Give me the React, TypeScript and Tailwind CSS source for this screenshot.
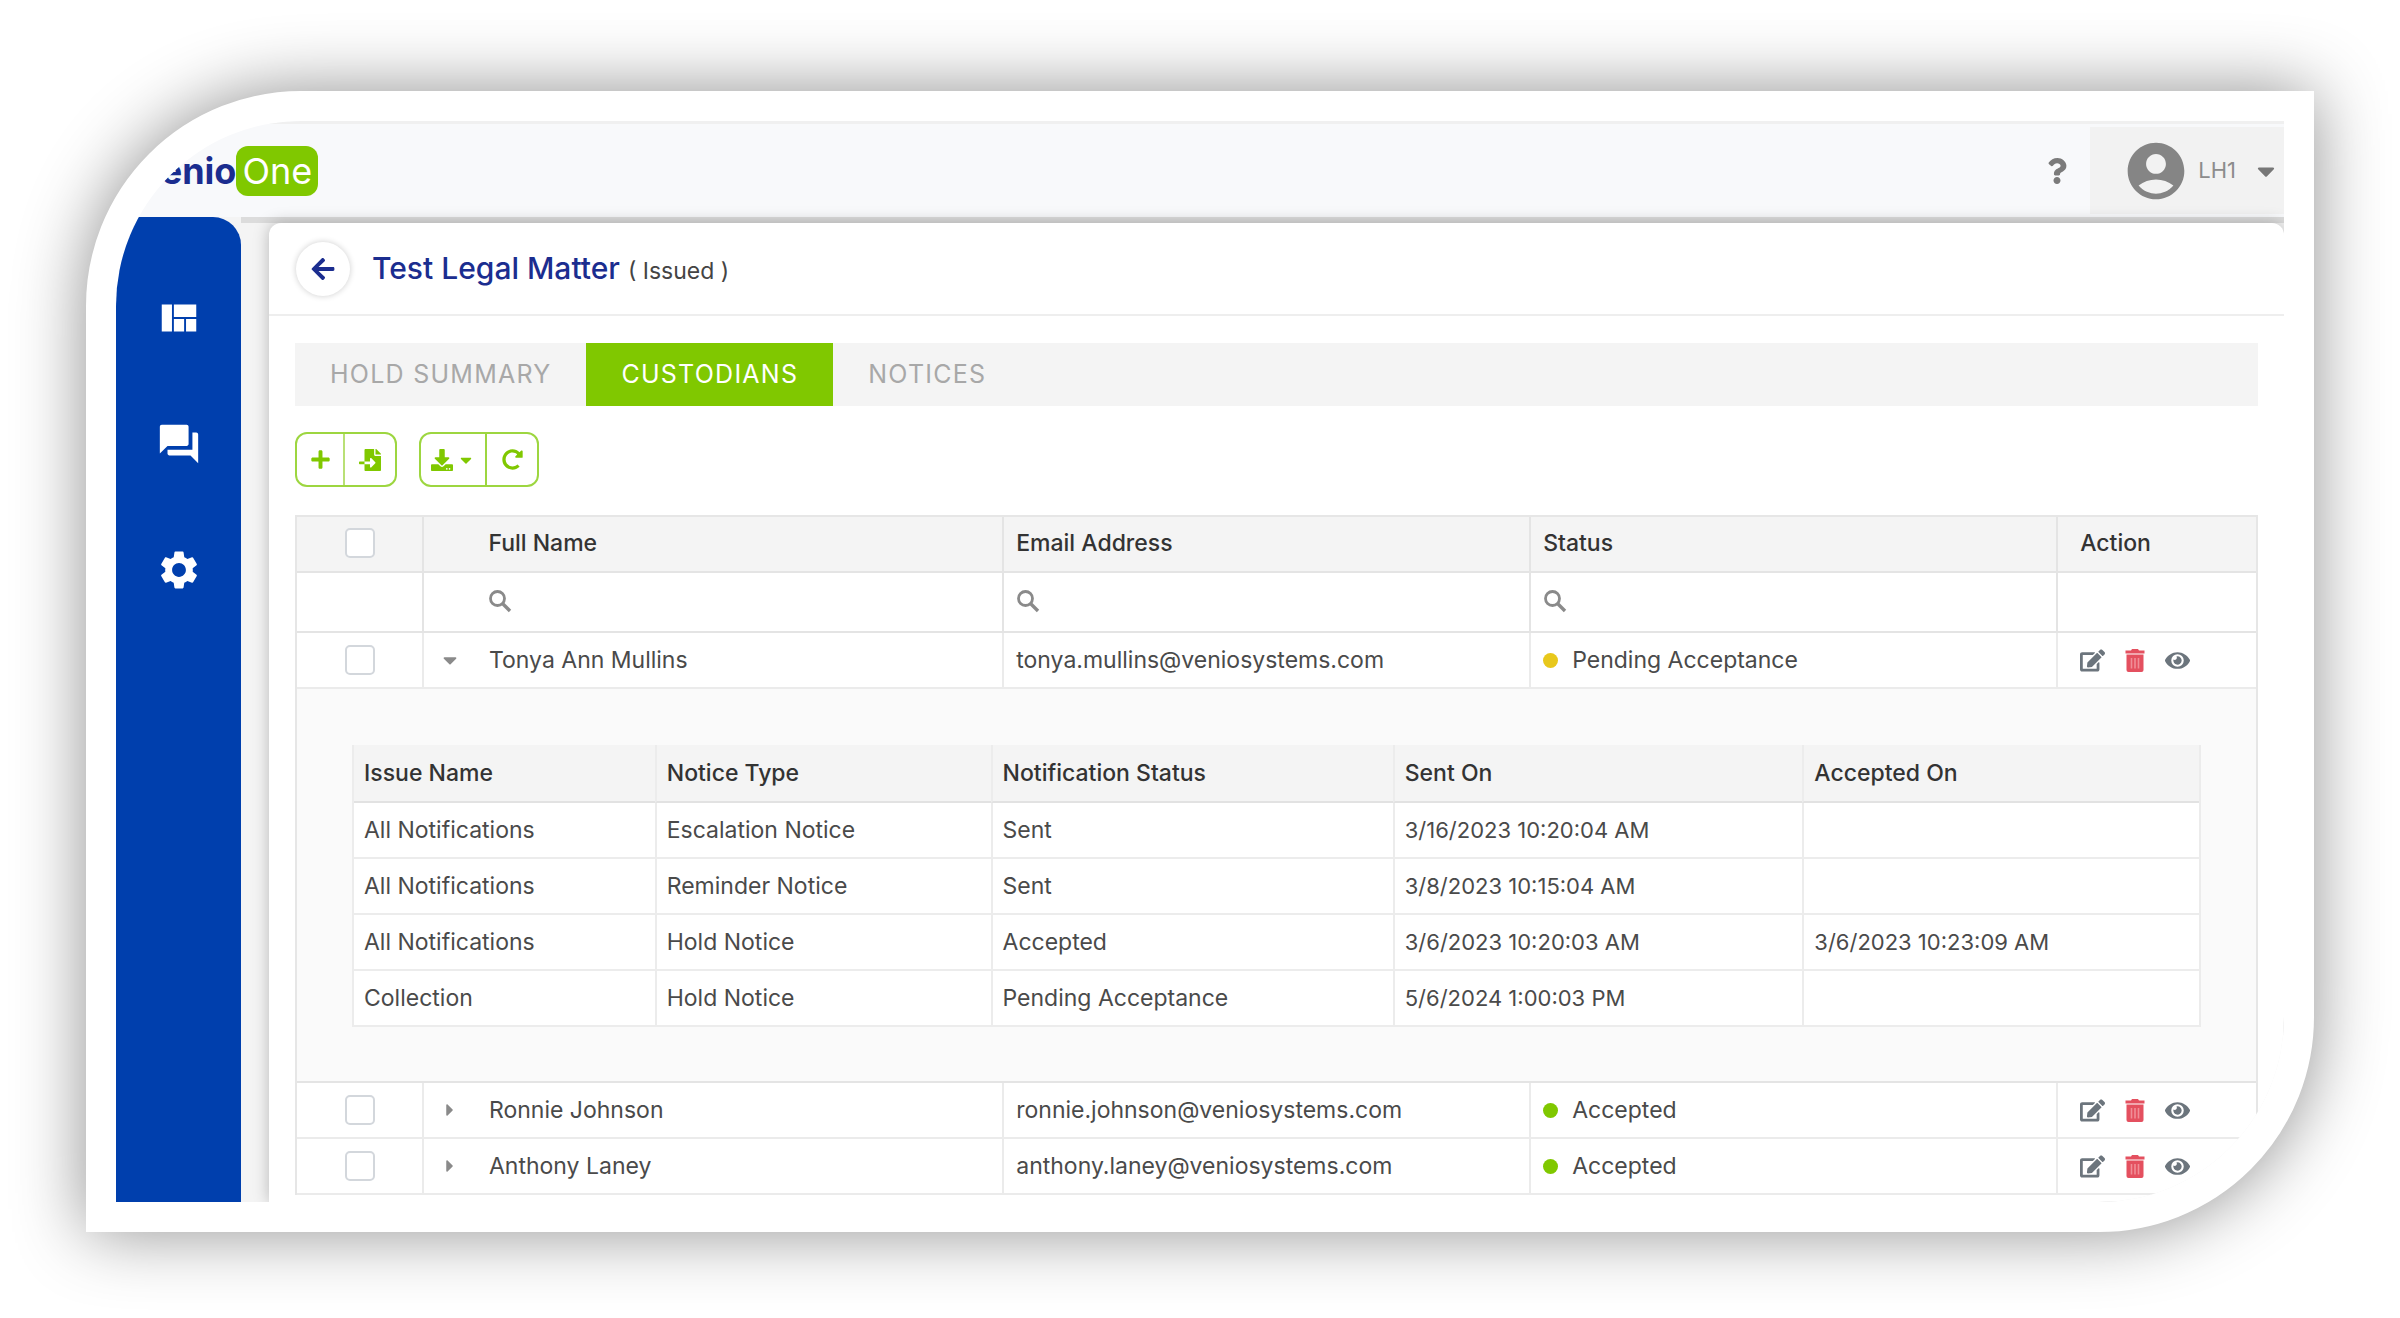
import { useState } from 'react'
import { FaPlus, FaFileImport, FaDownload, FaCaretDown, FaCaretRight, FaQuestion, FaEdit, FaEye, FaArrowLeft, FaRedoAlt } from 'react-icons/fa'
import { MdAccountCircle, MdSettings, MdQuestionAnswer, MdViewQuilt } from 'react-icons/md'

type Custodian = {
  name: string
  email: string
  status: 'Pending Acceptance' | 'Accepted'
}

const custodians: Custodian[] = [
  { name: 'Tonya Ann Mullins', email: 'tonya.mullins@veniosystems.com', status: 'Pending Acceptance' },
  { name: 'Ronnie Johnson', email: 'ronnie.johnson@veniosystems.com', status: 'Accepted' },
  { name: 'Anthony Laney', email: 'anthony.laney@veniosystems.com', status: 'Accepted' },
]

const notices = [
  { issue: 'All Notifications', type: 'Escalation Notice', status: 'Sent', sentOn: '3/16/2023 10:20:04 AM', acceptedOn: '' },
  { issue: 'All Notifications', type: 'Reminder Notice', status: 'Sent', sentOn: '3/8/2023 10:15:04 AM', acceptedOn: '' },
  { issue: 'All Notifications', type: 'Hold Notice', status: 'Accepted', sentOn: '3/6/2023 10:20:03 AM', acceptedOn: '3/6/2023 10:23:09 AM' },
  { issue: 'Collection', type: 'Hold Notice', status: 'Pending Acceptance', sentOn: '5/6/2024 1:00:03 PM', acceptedOn: '' },
]

const tabs = ['HOLD SUMMARY', 'CUSTODIANS', 'NOTICES']

function Checkbox({ label }: { label: string }) {
  return (
    <input
      type="checkbox"
      aria-label={label}
      className="mx-auto block size-[30px] appearance-none rounded-[5px] border-2 border-[#d3d7dc] bg-white checked:bg-[#80c800]"
    />
  )
}

function TrashIcon() {
  return (
    <svg viewBox="0 0 20 23" className="h-[23px] w-5" aria-hidden="true">
      <path d="M7 0h6l1 1.5h5.5v3H.5v-3H6z" fill="#e4505f" />
      <path d="M1.5 5.5h17V21a2 2 0 0 1-2 2h-13a2 2 0 0 1-2-2z" fill="#e4505f" />
      <path d="M6.5 9v10.5M10 9v10.5M13.5 9v10.5" stroke="#f08e97" strokeWidth="1.6" />
    </svg>
  )
}

function SearchIcon() {
  return (
    <svg viewBox="0 0 24 24" className="size-6" fill="none" stroke="currentColor" aria-hidden="true">
      <circle cx="9.5" cy="9.5" r="7" strokeWidth="2.8" />
      <path d="M14.5 14.5l7.5 7.5" strokeWidth="3.4" />
    </svg>
  )
}

function TopBar() {
  return (
    <header className="flex h-24 items-stretch border-t-3 border-[#f0f0f0] bg-[#f8f9fb]">
      <div className="flex flex-1 items-center pl-5">
        <span className="text-4xl font-bold text-[#1b2d8f]">Venio</span>
        <span className="flex h-[50px] items-center rounded-xl bg-[#80c800] px-1.5 text-4xl text-white">One</span>
      </div>
      <button type="button" aria-label="Help" className="px-5 text-[#7b7b7b]">
        <FaQuestion size={26} />
      </button>
      <button type="button" className="my-[3px] flex items-center bg-[#f2f2f2] pl-8 pr-1 text-[22px] text-[#8c8c8c]">
        <MdAccountCircle size={68} className="text-[#858585]" />
        <span className="pl-2">LH1</span>
        <FaCaretDown size={28} className="ml-4 text-[#777777]" />
      </button>
    </header>
  )
}

function Sidebar() {
  return (
    <nav className="flex w-[125px] shrink-0 flex-col items-center gap-20 rounded-tr-[28px] bg-[#003fad] pt-[78px] text-white">
      <a href="#dashboard" aria-label="Dashboard">
        <MdViewQuilt size={46} />
      </a>
      <a href="#messages" aria-label="Messages">
        <MdQuestionAnswer size={46} />
      </a>
      <a href="#settings" aria-label="Settings">
        <MdSettings size={46} />
      </a>
    </nav>
  )
}

function Toolbar() {
  return (
    <div className="mt-[26px] flex gap-[22px] text-[#80c800]">
      <div className="flex h-[55px] divide-x-2 divide-[#b9e076] rounded-xl border-2 border-[#9dd640]">
        <button type="button" aria-label="Add custodian" className="flex w-12 items-center justify-center">
          <FaPlus size={21} />
        </button>
        <button type="button" aria-label="Import custodians" className="flex w-[50px] items-center justify-center">
          <FaFileImport size={22} />
        </button>
      </div>
      <div className="flex h-[55px] divide-x-2 divide-[#9dd640] rounded-xl border-2 border-[#9dd640]">
        <button type="button" aria-label="Download" className="flex w-[66px] items-center justify-center gap-1">
          <FaDownload size={22} />
          <FaCaretDown size={18} />
        </button>
        <button type="button" aria-label="Refresh" className="flex w-[50px] items-center justify-center">
          <FaRedoAlt size={21} />
        </button>
      </div>
    </div>
  )
}

function NoticeTable() {
  return (
    <table className="w-full table-fixed border-separate border-spacing-0 border-x-2 border-[#ececec] bg-white text-left">
      <colgroup>
        <col className="w-[16.3%]" />
        <col className="w-[18.2%]" />
        <col className="w-[21.8%]" />
        <col className="w-[22.2%]" />
        <col />
      </colgroup>
      <thead>
        <tr className="h-[58px] bg-[#f4f4f4] text-[#333333]">
          {['Issue Name', 'Notice Type', 'Notification Status', 'Sent On', 'Accepted On'].map((title) => (
            <th key={title} className="border-b-2 border-l-2 border-b-[#e2e2e2] border-l-[#ececec] px-2.5 font-medium first:border-l-0">
              {title}
            </th>
          ))}
        </tr>
      </thead>
      <tbody>
        {notices.map((notice, i) => (
          <tr key={i} className="h-14 *:border-b-2 *:border-l-2 *:border-[#ececec] *:px-2.5 *:first:border-l-0">
            <td>{notice.issue}</td>
            <td>{notice.type}</td>
            <td>{notice.status}</td>
            <td className="text-[22px]">{notice.sentOn}</td>
            <td className="text-[22px]">{notice.acceptedOn}</td>
          </tr>
        ))}
      </tbody>
    </table>
  )
}

function CustodianRow({ custodian, open, onToggle }: { custodian: Custodian; open: boolean; onToggle: () => void }) {
  const { name, email, status } = custodian

  return (
    <>
      <tr className="h-14 *:border-b-2 *:border-[#ebebeb]">
        <td>
          <Checkbox label={`Select ${name}`} />
        </td>
        <td className="border-l-2 pl-3.5">
          <button type="button" aria-label={`Toggle ${name}`} aria-expanded={open} onClick={onToggle} className="flex size-6 items-center justify-center text-[#8a8a8a]">
            {open ? <FaCaretDown size={22} /> : <FaCaretRight size={20} />}
          </button>
        </td>
        <td>{name}</td>
        <td className="border-l-2 pl-3">{email}</td>
        <td className="border-l-2 pl-3">
          <span className="flex items-center gap-3.5">
            <span className={`size-[15px] rounded-full ${status === 'Accepted' ? 'bg-[#80c800]' : 'bg-[#e8c81c]'}`} />
            {status}
          </span>
        </td>
        <td className="border-l-2 pl-[22px]">
          <span className="flex items-center gap-5 text-[#6c757d]">
            <button type="button" aria-label={`Edit ${name}`}>
              <FaEdit size={25} />
            </button>
            <button type="button" aria-label={`Delete ${name}`}>
              <TrashIcon />
            </button>
            <button type="button" aria-label={`View ${name}`}>
              <FaEye size={25} />
            </button>
          </span>
        </td>
      </tr>
      {open && (
        <tr>
          <td colSpan={6} className="border-b-2 border-[#e4e4e4] bg-[#fafafa] px-[55px] pb-[54px] pt-[56px]">
            <NoticeTable />
          </td>
        </tr>
      )}
    </>
  )
}

function CustodianTable() {
  const [openName, setOpenName] = useState<string | null>('Tonya Ann Mullins')

  return (
    <table className="mt-7 w-full table-fixed border-separate border-spacing-0 border-x-2 border-t-2 border-[#e6e6e6] text-left text-[23px] text-[#4a4a4a]">
      <colgroup>
        <col className="w-[6.4%]" />
        <col className="w-[3.4%]" />
        <col className="w-[26.2%]" />
        <col className="w-[26.9%]" />
        <col className="w-[26.9%]" />
        <col />
      </colgroup>
      <thead>
        <tr className="h-14 bg-[#f4f4f4] text-[#333333] *:border-b-2 *:border-[#e4e4e4] *:pb-0.5 *:font-medium">
          <th>
            <Checkbox label="Select all custodians" />
          </th>
          <th colSpan={2} className="border-l-2 pl-16">Full Name</th>
          <th className="border-l-2 pl-3">Email Address</th>
          <th className="border-l-2 pl-3">Status</th>
          <th className="border-l-2 pl-[22px]">Action</th>
        </tr>
        <tr className="h-[60px] text-[#8a8a8a] *:border-b-2 *:border-[#e4e4e4] *:pb-0.5">
          <td />
          <td colSpan={2} className="border-l-2 pl-16">
            <SearchIcon />
          </td>
          <td className="border-l-2 pl-3">
            <SearchIcon />
          </td>
          <td className="border-l-2 pl-3">
            <SearchIcon />
          </td>
          <td className="border-l-2" />
        </tr>
      </thead>
      <tbody>
        {custodians.map((custodian) => (
          <CustodianRow
            key={custodian.name}
            custodian={custodian}
            open={openName === custodian.name}
            onToggle={() => setOpenName(openName === custodian.name ? null : custodian.name)}
          />
        ))}
      </tbody>
    </table>
  )
}

export default function App() {
  const [activeTab, setActiveTab] = useState('CUSTODIANS')

  return (
    <div className="min-h-screen bg-white px-[86px] pb-[86px] pt-[91px] font-['Inter',sans-serif]">
      <div className="overflow-hidden rounded-br-[215px] rounded-tl-[215px] border-30 border-white bg-white shadow-[0_0_70px_rgba(0,0,0,0.44)]">
        <TopBar />
        <div className="flex bg-[#f4f4f4]">
          <Sidebar />
          <div className="flex min-w-0 flex-1 border-t-[6px] border-[#dcdcdc] pl-7">
            <main className="min-w-0 flex-1 rounded-t-xl bg-white pb-[7px] shadow-[0_0_16px_rgba(0,0,0,0.25)]">
              <div className="flex h-[93px] items-center gap-[22px] border-b-2 border-[#eeeeee] pl-[27px]">
                <button type="button" aria-label="Back" className="flex size-[54px] items-center justify-center rounded-full bg-white text-[#1b2d8f] shadow-[0_0_6px_rgba(0,0,0,0.2)]">
                  <FaArrowLeft size={26} />
                </button>
                <h1 className="text-[30px] font-medium text-[#1b2d8f]">
                  Test Legal Matter <span className="text-[23px] font-normal text-[#444444]">( Issued )</span>
                </h1>
              </div>
              <div className="px-[26px]">
                <div role="tablist" className="mt-[27px] flex h-[63px] bg-[#f4f4f4] text-[25px] tracking-wider">
                  {tabs.map((tab) => (
                    <button
                      key={tab}
                      type="button"
                      role="tab"
                      aria-selected={activeTab === tab}
                      onClick={() => setActiveTab(tab)}
                      className={`px-[35px] ${activeTab === tab ? 'bg-[#80c800] text-white' : 'text-[#a8a8a8]'}`}
                    >
                      {tab}
                    </button>
                  ))}
                </div>
                <Toolbar />
                <CustodianTable />
              </div>
            </main>
          </div>
        </div>
      </div>
    </div>
  )
}
